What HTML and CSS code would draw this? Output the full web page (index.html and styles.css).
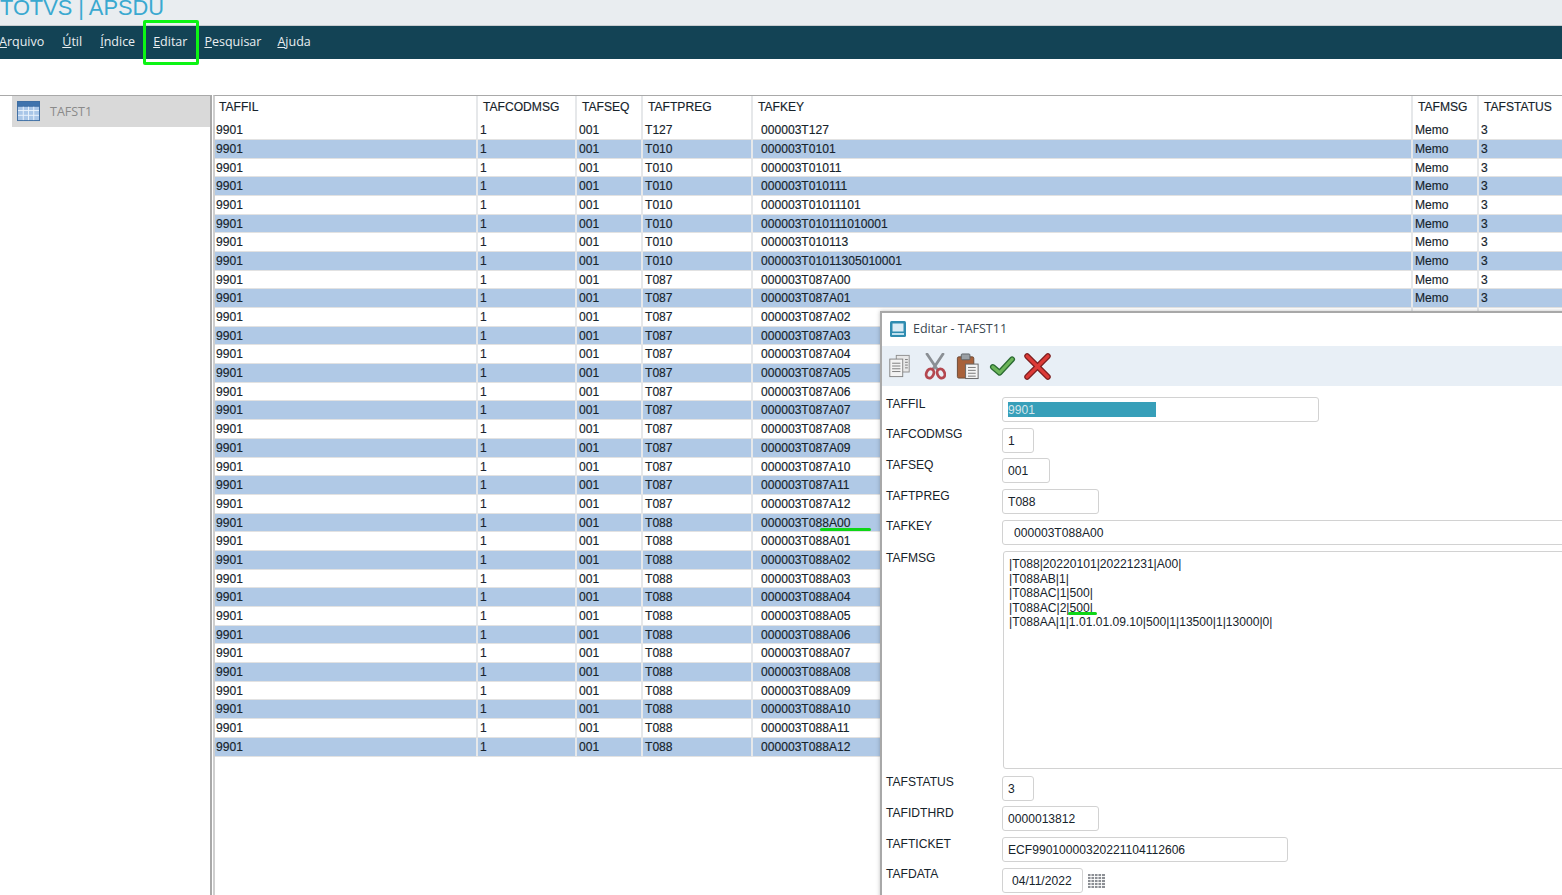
FILE: index.html
```html
<!DOCTYPE html>
<html lang="pt">
<head>
<meta charset="utf-8">
<title>TOTVS | APSDU</title>
<link rel="stylesheet" href="styles.css">
</head>
<body>
<header class="titlebar"><span class="brand">TOTVS | APSDU</span></header>
<nav class="menu">
  <span class="menu-item"><u>A</u>rquivo</span>
  <span class="menu-item"><u>Ú</u>til</span>
  <span class="menu-item"><u>Í</u>ndice</span>
  <span class="menu-item"><u>E</u>ditar</span>
  <span class="menu-item"><u>P</u>esquisar</span>
  <span class="menu-item"><u>A</u>juda</span>
</nav>
<div class="note-box"></div>
<main class="workspace">
  <aside class="sidebar">
    <div class="side-item">
      <svg class="side-icon" viewBox="0 0 24 22"><rect x="0.5" y="0.5" width="23" height="20" fill="#a9c6e8" stroke="#3d6da3"/><rect x="0.5" y="0.5" width="23" height="5" fill="#3f73ad" stroke="#3d6da3"/><path d="M1 10h22M1 15h22M6.500 6v14M12 6v14M17.500 6v14" stroke="#eaf2fb" fill="none"/></svg>
      <span>TAFST1</span>
    </div>
  </aside>
  <section class="grid">
    <div class="row head"><span>TAFFIL</span><span>TAFCODMSG</span><span>TAFSEQ</span><span>TAFTPREG</span><span>TAFKEY</span><span>TAFMSG</span><span>TAFSTATUS</span></div>
    <div class="row"><span>9901</span><span>1</span><span>001</span><span>T127</span><span>000003T127</span><span>Memo</span><span>3</span></div>
    <div class="row"><span>9901</span><span>1</span><span>001</span><span>T010</span><span>000003T0101</span><span>Memo</span><span>3</span></div>
    <div class="row"><span>9901</span><span>1</span><span>001</span><span>T010</span><span>000003T01011</span><span>Memo</span><span>3</span></div>
    <div class="row"><span>9901</span><span>1</span><span>001</span><span>T010</span><span>000003T010111</span><span>Memo</span><span>3</span></div>
    <div class="row"><span>9901</span><span>1</span><span>001</span><span>T010</span><span>000003T01011101</span><span>Memo</span><span>3</span></div>
    <div class="row"><span>9901</span><span>1</span><span>001</span><span>T010</span><span>000003T010111010001</span><span>Memo</span><span>3</span></div>
    <div class="row"><span>9901</span><span>1</span><span>001</span><span>T010</span><span>000003T010113</span><span>Memo</span><span>3</span></div>
    <div class="row"><span>9901</span><span>1</span><span>001</span><span>T010</span><span>000003T01011305010001</span><span>Memo</span><span>3</span></div>
    <div class="row"><span>9901</span><span>1</span><span>001</span><span>T087</span><span>000003T087A00</span><span>Memo</span><span>3</span></div>
    <div class="row"><span>9901</span><span>1</span><span>001</span><span>T087</span><span>000003T087A01</span><span>Memo</span><span>3</span></div>
    <div class="row"><span>9901</span><span>1</span><span>001</span><span>T087</span><span>000003T087A02</span><span>Memo</span><span>3</span></div>
    <div class="row"><span>9901</span><span>1</span><span>001</span><span>T087</span><span>000003T087A03</span><span>Memo</span><span>3</span></div>
    <div class="row"><span>9901</span><span>1</span><span>001</span><span>T087</span><span>000003T087A04</span><span>Memo</span><span>3</span></div>
    <div class="row"><span>9901</span><span>1</span><span>001</span><span>T087</span><span>000003T087A05</span><span>Memo</span><span>3</span></div>
    <div class="row"><span>9901</span><span>1</span><span>001</span><span>T087</span><span>000003T087A06</span><span>Memo</span><span>3</span></div>
    <div class="row"><span>9901</span><span>1</span><span>001</span><span>T087</span><span>000003T087A07</span><span>Memo</span><span>3</span></div>
    <div class="row"><span>9901</span><span>1</span><span>001</span><span>T087</span><span>000003T087A08</span><span>Memo</span><span>3</span></div>
    <div class="row"><span>9901</span><span>1</span><span>001</span><span>T087</span><span>000003T087A09</span><span>Memo</span><span>3</span></div>
    <div class="row"><span>9901</span><span>1</span><span>001</span><span>T087</span><span>000003T087A10</span><span>Memo</span><span>3</span></div>
    <div class="row"><span>9901</span><span>1</span><span>001</span><span>T087</span><span>000003T087A11</span><span>Memo</span><span>3</span></div>
    <div class="row"><span>9901</span><span>1</span><span>001</span><span>T087</span><span>000003T087A12</span><span>Memo</span><span>3</span></div>
    <div class="row"><span>9901</span><span>1</span><span>001</span><span>T088</span><span>000003T088A00</span><span>Memo</span><span>3</span></div>
    <div class="row"><span>9901</span><span>1</span><span>001</span><span>T088</span><span>000003T088A01</span><span>Memo</span><span>3</span></div>
    <div class="row"><span>9901</span><span>1</span><span>001</span><span>T088</span><span>000003T088A02</span><span>Memo</span><span>3</span></div>
    <div class="row"><span>9901</span><span>1</span><span>001</span><span>T088</span><span>000003T088A03</span><span>Memo</span><span>3</span></div>
    <div class="row"><span>9901</span><span>1</span><span>001</span><span>T088</span><span>000003T088A04</span><span>Memo</span><span>3</span></div>
    <div class="row"><span>9901</span><span>1</span><span>001</span><span>T088</span><span>000003T088A05</span><span>Memo</span><span>3</span></div>
    <div class="row"><span>9901</span><span>1</span><span>001</span><span>T088</span><span>000003T088A06</span><span>Memo</span><span>3</span></div>
    <div class="row"><span>9901</span><span>1</span><span>001</span><span>T088</span><span>000003T088A07</span><span>Memo</span><span>3</span></div>
    <div class="row"><span>9901</span><span>1</span><span>001</span><span>T088</span><span>000003T088A08</span><span>Memo</span><span>3</span></div>
    <div class="row"><span>9901</span><span>1</span><span>001</span><span>T088</span><span>000003T088A09</span><span>Memo</span><span>3</span></div>
    <div class="row"><span>9901</span><span>1</span><span>001</span><span>T088</span><span>000003T088A10</span><span>Memo</span><span>3</span></div>
    <div class="row"><span>9901</span><span>1</span><span>001</span><span>T088</span><span>000003T088A11</span><span>Memo</span><span>3</span></div>
    <div class="row"><span>9901</span><span>1</span><span>001</span><span>T088</span><span>000003T088A12</span><span>Memo</span><span>3</span></div>
  </section>
</main>
<section class="dialog">
  <div class="dialog-title">
    <svg class="win-icon" viewBox="0 0 16 16"><rect width="16" height="16" rx="1.500" fill="#2f8cb0"/><rect x="2.500" y="2.500" width="11" height="8" fill="#dcecf5"/><rect x="2" y="12" width="12" height="2" fill="#bfe0ee"/></svg>
    <span>Editar - TAFST11</span>
  </div>
  <div class="toolbar">
    <svg class="tool copy" viewBox="0 0 24 26"><rect x="8.500" y="1.500" width="14" height="18" fill="#e8e8e8" stroke="#8d8d8d"/><rect x="1.500" y="5.500" width="14" height="19" fill="#f3f3f3" stroke="#808080"/><path d="M4 10h9M4 13h9M4 16h9M4 19h9M18 6h3M18 9h3M18 12h3M18 15h3" stroke="#777"/></svg>
    <svg class="tool cut" viewBox="0 0 22 27"><path d="M3 1l10 15M19 1L9 16" stroke="#8a8f94" stroke-width="2.800" fill="none" stroke-linecap="round"/><ellipse cx="6" cy="20.500" rx="3.600" ry="4.800" transform="rotate(25 6 20.500)" fill="none" stroke="#b4474f" stroke-width="2.800"/><ellipse cx="17" cy="20.500" rx="3.600" ry="4.800" transform="rotate(-25 17 20.500)" fill="none" stroke="#b4474f" stroke-width="2.800"/></svg>
    <svg class="tool paste" viewBox="0 0 24 28"><rect x="1" y="4" width="17" height="22" rx="1.500" fill="#a8613a" stroke="#6b4a36"/><rect x="5" y="1" width="9" height="6" rx="1" fill="#9aa0a5" stroke="#5f6468"/><rect x="9.500" y="11.500" width="13" height="15" fill="#f4f4f4" stroke="#666"/><path d="M12 15h8M12 18h8M12 21h8M12 24h8" stroke="#777"/></svg>
    <svg class="tool ok" viewBox="0 0 28 24"><path d="M4 13l7 6L24 5" fill="none" stroke="#2a6a32" stroke-width="6" stroke-linecap="round" stroke-linejoin="round"/><path d="M4 13l7 6L24 5" fill="none" stroke="#6cb55a" stroke-width="3.400" stroke-linecap="round" stroke-linejoin="round"/></svg>
    <svg class="tool no" viewBox="0 0 26 26"><path d="M3 3l20 20M23 3L3 23" stroke="#7d1f20" stroke-width="5.500" stroke-linecap="round"/><path d="M3 3l20 20M23 3L3 23" stroke="#dd3a37" stroke-width="3.200" stroke-linecap="round"/></svg>
  </div>
  <form class="fields">
    <div class="field"><label>TAFFIL</label><div class="input w-fil"><span class="selected">9901</span></div></div>
    <div class="field"><label>TAFCODMSG</label><div class="input w-s">1</div></div>
    <div class="field"><label>TAFSEQ</label><div class="input w-m">001</div></div>
    <div class="field"><label>TAFTPREG</label><div class="input w-l">T088</div></div>
    <div class="field"><label>TAFKEY</label><div class="input w-full pad-key">000003T088A00</div></div>
    <div class="field memo-field"><label>TAFMSG</label><div class="memo">|T088|20220101|20221231|A00|<br>|T088AB|1|<br>|T088AC|1|500|<br>|T088AC|2|500|<br>|T088AA|1|1.01.01.09.10|500|1|13500|1|13000|0|</div></div>
    <div class="field"><label>TAFSTATUS</label><div class="input w-s">3</div></div>
    <div class="field"><label>TAFIDTHRD</label><div class="input w-l">0000013812</div></div>
    <div class="field"><label>TAFTICKET</label><div class="input w-tk">ECF99010000320221104112606</div></div>
    <div class="field"><label>TAFDATA</label><div class="input w-dt">04/11/2022</div>
      <svg class="cal" viewBox="0 0 17 14"><path d="M0 0h17v14H0z" fill="#8c8f94"/><path d="M3 0v14M6.500 0v14M10 0v14M13.500 0v14M0 2.500h17M0 5.500h17M0 8.500h17M0 11.500h17" stroke="#fff" stroke-width=".9"/></svg>
    </div>
  </form>
</section>
<div class="stroke stroke-key"></div>
<div class="stroke stroke-memo"></div>
</body>
</html>
```
FILE: styles.css
```css
* { box-sizing: border-box; }
html, body { margin: 0; height: 100%; overflow: hidden; background: #fff; }
body { font-family: "Liberation Sans", Arial, sans-serif; font-size: 12.100px; color: #16232b; }

.titlebar { height: 26px; background: #e9edf0; border-bottom: 1px solid #c9cdd0; overflow: hidden; display: flex; align-items: flex-end; }
.brand { font-size: 21.800px; line-height: 22px; color: #3aa9d0; padding-bottom: 6px; white-space: nowrap; }

.menu { height: 33px; background: #134355; color: #e9eef1; display: flex; align-items: center; font-family: "Open Sans", sans-serif; font-size: 12.500px; gap: 18px; padding-bottom: 2px; }
.menu-item { white-space: nowrap; }
.menu-item:first-child { margin-left: -1px; }
.menu-item:nth-child(4) { margin-right: -1px; }
.menu-item:nth-child(5) { margin-right: -2px; }

.note-box { position: absolute; left: 143px; top: 20px; width: 56px; height: 45px; border: 3px solid #0cf414; border-radius: 2px; }

.workspace { display: flex; height: 800px; margin-top: 36px; }
.sidebar { width: 212px; flex: none; padding-left: 12px; border-right: 2px solid #a9a9a9; border-top: 1px solid #a9a9a9; }
.side-item { height: 31px; background: #d9d9d9; display: flex; align-items: center; gap: 10px; padding-left: 5px; color: #8a8a8a; font-family: "Open Sans", sans-serif; font-size: 12.500px; }
.side-icon { width: 23px; height: 21px; }

.grid { flex: 1; min-width: 0; margin-left: 1px; border-top: 1px solid #a9a9a9; border-left: 2px solid #cfcfcf; }
.row { display: grid; grid-template-columns: 263px 99px 66px 110px 660px 66px 1fr; height: 18.700px; line-height: 18.400px; white-space: nowrap; -webkit-text-stroke: 0.15px currentColor; }
.row:nth-child(odd) { background: #b0c9e6; }
.row.head { height: 25.150px; line-height: 22px; background: #fff; }
.row > span { padding-left: 2px; border-right: 2px solid #e6e8ea; border-bottom: 1px solid #e2e2e2; overflow: hidden; }
.row > span:last-child { border-right: 0; }
.row > span:first-child { padding-left: 1px; }
.row > span:nth-child(5) { padding-left: 8px; }
.row.head > span { padding-left: 5px; border-bottom: 0; }
.row.head > span:first-child { padding-left: 4px; }

.dialog { position: absolute; left: 880px; top: 311px; width: 720px; height: 620px; background: #fff; border: 2px solid #a8a8a8; border-right: 0; box-shadow: 0 0 4px rgba(0, 0, 0, .25); }
.dialog-title { height: 33px; display: flex; align-items: center; gap: 7px; padding: 0 0 2px 8px; font-family: "Open Sans", sans-serif; font-size: 12.500px; color: #3a4750; }
.win-icon { width: 16px; height: 16px; }
.toolbar { height: 40px; background: #e8eff6; display: flex; align-items: center; padding-left: 6px; }
.tool { display: block; flex: none; }
.copy { width: 23px; height: 24px; }
.cut { width: 22px; height: 27px; margin-left: 13px; }
.paste { width: 24px; height: 27px; margin-left: 10px; }
.ok { width: 27px; height: 24px; margin-left: 9px; }
.no { width: 27px; height: 27px; margin-left: 8px; }

.fields { display: flex; flex-direction: column; gap: 5.700px; padding: 11px 0 0 4px; }
.field { display: flex; height: 25px; }
.field label { width: 116px; flex: none; line-height: 13px; padding-top: 0.500px; }
.input { height: 25px; line-height: 24px; border: 1px solid #d2d2d2; border-radius: 3px; padding-left: 5px; background: #fff; white-space: nowrap; }
.w-fil { width: 317px; line-height: 23px; }
.w-s { width: 32px; }
.w-m { width: 48px; }
.w-l { width: 97px; }
.w-tk { width: 286px; }
.w-dt { width: 81px; padding-left: 9px; }
.w-full { width: 600px; }
.pad-key { padding-left: 11px; }
.selected { display: block; width: 148px; height: 15px; line-height: 16px; margin-top: 4px; background: #379fb9; color: #d4e6ec; }
.memo-field { height: 218.500px; margin-top: 1px; }
.memo { width: 600px; height: 218px; margin-left: 1px; border: 1px solid #d2d2d2; border-radius: 3px; padding: 5px; line-height: 14.500px; }
.cal { width: 17px; height: 14px; margin: 6px 0 0 5px; }

.stroke { position: absolute; height: 3px; background: #0ed616; border-radius: 2px; }
.stroke-key { left: 820px; top: 528px; width: 51px; }
.stroke-memo { left: 1068px; top: 612px; width: 29px; }
```
